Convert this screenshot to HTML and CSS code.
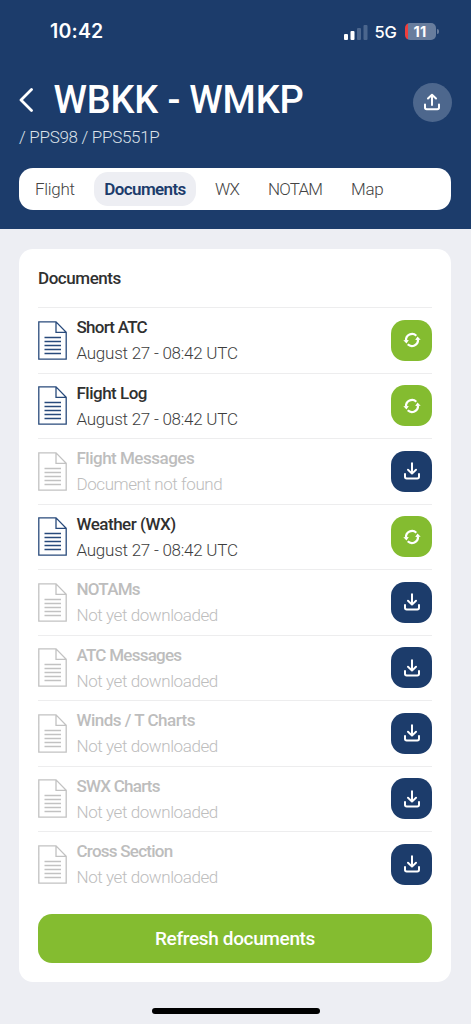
FILE: index.html
```
<!DOCTYPE html>
<html lang="en">
<head>
<meta charset="utf-8">
<title>Documents</title>
<link rel="stylesheet" href="styles.css">
</head>
<body>
<svg class="sprite" width="0" height="0">
  <symbol id="doc" viewBox="0 0 29 39">
    <path d="M.8.8H18L28.200 11.300V38.200H.8ZM18 .8V11.300H28.200" fill="none" stroke="currentColor" stroke-width="1.300"/>
    <path d="M6.500 16.500h16.500M6.500 20.500h16.500M6.500 24.500h16.500M6.500 28.500h16.500M6.500 32.500h16.500" stroke="currentColor" stroke-width="1.300"/>
  </symbol>
  <symbol id="download" viewBox="0 0 18 18">
    <path d="M9 1.300V11.500M5 7.800 9 11.600 13 7.800M2 12V14.700Q2 16.400 3.700 16.400H14.300Q16 16.400 16 14.700V12" fill="none" stroke="currentColor" stroke-width="2" stroke-linecap="round" stroke-linejoin="round"/>
  </symbol>
  <symbol id="sync" viewBox="0 0 18 18">
    <path d="M3 9.500A6.100 6.100 0 0 1 13.300 4.700M15 8.500A6.100 6.100 0 0 1 4.700 13.300" fill="none" stroke="currentColor" stroke-width="2.200"/>
    <path d="M.3 9.300 5.800 8.900 3.500 12.500ZM17.700 8.700 12.200 9.100 14.500 5.500Z" fill="currentColor"/>
  </symbol>
</svg>
<header class="header">
  <div class="status">
    <span class="time">10:42</span>
    <div class="indicators">
      <svg class="signal" viewBox="0 0 24 16"><rect x="0" y="10" width="4" height="6" rx="1" fill="#fff"/><rect x="6.500" y="7" width="4" height="9" rx="1" fill="#fff"/><rect x="13" y="4" width="4" height="12" rx="1" fill="#4b668d"/><rect x="19.500" y="1" width="4" height="15" rx="1" fill="#4b668d"/></svg>
      <span class="network">5G</span>
      <span class="battery">11</span>
      <span class="battery-tip"></span>
    </div>
  </div>
  <div class="title-row">
    <svg class="back" viewBox="0 0 14 24"><path d="M12.500 1.500 2 12 12.500 22.500" fill="none" stroke="#fff" stroke-width="2.800" stroke-linecap="round" stroke-linejoin="round"/></svg>
    <div class="title-box"><h1 class="title">WBKK - WMKP</h1></div>
    <button class="share"><svg class="icon" viewBox="0 0 18 18"><path d="M9 12V2M5 5.500 9 1.700 13 5.500M2 11.500V14.500Q2 16.200 3.700 16.200H14.300Q16 16.200 16 14.500V11.500" fill="none" stroke="#fff" stroke-width="2" stroke-linecap="round" stroke-linejoin="round"/></svg></button>
  </div>
  <p class="subtitle">/ PPS98 / PPS551P</p>
  <nav class="tabs">
    <span class="tab tab-flight">Flight</span>
    <span class="tab tab-documents">Documents</span>
    <span class="tab tab-wx">WX</span>
    <span class="tab tab-notam">NOTAM</span>
    <span class="tab tab-map">Map</span>
  </nav>
</header>
<main class="card">
  <h2 class="heading">Documents</h2>
  <div class="row"><svg class="doc"><use href="#doc"/></svg><div class="text"><div class="name tight">Short ATC</div><div class="info date">August 27 - 08:42 UTC</div></div><button class="action sync"><svg class="icon"><use href="#sync"/></svg></button></div>
  <div class="row"><svg class="doc"><use href="#doc"/></svg><div class="text"><div class="name">Flight Log</div><div class="info date">August 27 - 08:42 UTC</div></div><button class="action sync"><svg class="icon"><use href="#sync"/></svg></button></div>
  <div class="row muted"><svg class="doc"><use href="#doc"/></svg><div class="text"><div class="name">Flight Messages</div><div class="info">Document not found</div></div><button class="action"><svg class="icon"><use href="#download"/></svg></button></div>
  <div class="row"><svg class="doc"><use href="#doc"/></svg><div class="text"><div class="name">Weather (WX)</div><div class="info date">August 27 - 08:42 UTC</div></div><button class="action sync"><svg class="icon"><use href="#sync"/></svg></button></div>
  <div class="row muted"><svg class="doc"><use href="#doc"/></svg><div class="text"><div class="name tight">NOTAMs</div><div class="info">Not yet downloaded</div></div><button class="action"><svg class="icon"><use href="#download"/></svg></button></div>
  <div class="row muted"><svg class="doc"><use href="#doc"/></svg><div class="text"><div class="name tight">ATC Messages</div><div class="info">Not yet downloaded</div></div><button class="action"><svg class="icon"><use href="#download"/></svg></button></div>
  <div class="row muted"><svg class="doc"><use href="#doc"/></svg><div class="text"><div class="name">Winds / T Charts</div><div class="info">Not yet downloaded</div></div><button class="action"><svg class="icon"><use href="#download"/></svg></button></div>
  <div class="row muted"><svg class="doc"><use href="#doc"/></svg><div class="text"><div class="name tight">SWX Charts</div><div class="info">Not yet downloaded</div></div><button class="action"><svg class="icon"><use href="#download"/></svg></button></div>
  <div class="row muted"><svg class="doc"><use href="#doc"/></svg><div class="text"><div class="name tight">Cross Section</div><div class="info">Not yet downloaded</div></div><button class="action"><svg class="icon"><use href="#download"/></svg></button></div>
  <button class="refresh">Refresh documents</button>
</main>
<div class="home-bar"></div>
</body>
</html>
```

FILE: styles.css
```
* { box-sizing: border-box; margin: 0; }
body { width: 471px; height: 1024px; overflow: hidden; background: #edeef3; font-family: Roboto, "Liberation Sans", sans-serif; color: #303030; display: flex; flex-direction: column; }
.sprite { position: absolute; }
button { border: 0; padding: 0; font-family: inherit; }
.header { height: 229px; flex: none; background: #1c3c6b; color: #fff; padding: 20px 19.5px 0 19px; }
.status { height: 23px; display: flex; justify-content: space-between; align-items: center; padding: 0 13px 0 31px; }
.time { font: 600 19.500px/23px Inter, sans-serif; letter-spacing: 0.2px; }
.indicators { display: flex; align-items: center; }
.signal { width: 24px; height: 16px; margin-right: 7px; }
.network { font: 500 16.500px/22px Inter, sans-serif; width: 23px; margin-right: 7px; letter-spacing: -0.3px; }
.battery { width: 31px; height: 17px; border-radius: 5px; background: linear-gradient(90deg, #ef3e3c 3px, #687d9d 3px); font: 700 14.500px/17px Inter, sans-serif; text-align: center; letter-spacing: 0.3px; }
.battery-tip { width: 2px; height: 5px; margin-left: 1px; border-radius: 0 2px 2px 0; background: #687d9d; }
.title-row { height: 50px; margin-top: 32px; display: flex; align-items: center; }
.back { width: 14px; height: 24px; }
.title-box { flex: 1; padding-left: 20.5px; }
.title { font-size: 38px; line-height: 50px; font-weight: 500; white-space: nowrap; letter-spacing: -0.2px; }
.share { width: 39px; height: 39px; margin-top: 4px; border-radius: 50%; background: #4d678d; display: grid; place-items: center; }
.icon { width: 18px; height: 18px; display: block; }
.subtitle { height: 24px; line-height: 24px; font-size: 17px; font-weight: 300; color: #dce2ea; letter-spacing: -0.3px; }
.tabs { height: 42px; margin-top: 19px; width: 432px; background: #fff; border-radius: 14px; padding: 4px 5px 4px 16px; display: flex; align-items: center; color: #444; font-size: 17px; font-weight: 300; letter-spacing: -0.3px; }
.tab { white-space: nowrap; flex: none; }
.tab-flight { width: 59px; }
.tab-documents { width: 102px; height: 34px; line-height: 34px; border-radius: 14px; background: #edeef3; color: #1c3c6b; font-weight: 600; text-align: center; margin-right: 19px; letter-spacing: -0.6px; }
.tab-wx { width: 53px; letter-spacing: -0.8px; }
.tab-notam { width: 83px; letter-spacing: -0.8px; }
.card { width: 432px; height: 733px; flex: none; margin: 20px 0 0 19px; border-radius: 14px; background: #fff; padding: 0 19px; display: flex; flex-direction: column; }
.heading { height: 58px; line-height: 59px; font-size: 17px; font-weight: 500; letter-spacing: -0.45px; }
.row { height: 65.5px; flex: none; border-top: 1.500px solid #ededee; display: flex; align-items: center; }
.doc { width: 29px; height: 39px; margin-right: 9.5px; color: #284a7b; }
.text { flex: 1; height: 50px; }
.name { font-size: 17px; line-height: 25px; font-weight: 500; letter-spacing: -0.5px; }
.tight { letter-spacing: -0.75px; }
.info { font-size: 17px; line-height: 26px; font-weight: 300; color: #3d3d3d; letter-spacing: -0.42px; }
.date { letter-spacing: -0.25px; }
.muted .doc { color: #c2c2c2; }
.muted .name { color: #bdbdbd; }
.muted .info { color: #bdbdbd; }
.action { width: 41px; height: 41px; border-radius: 14px; background: #1c3c6b; color: #fff; display: grid; place-items: center; }
.sync { background: #84bc30; }
.refresh { height: 49px; flex: none; margin-top: 17px; border-radius: 14px; background: #84bc30; color: #fff; font-size: 19px; line-height: 50px; font-weight: 500; letter-spacing: -0.35px; }
.home-bar { width: 168px; height: 6px; flex: none; border-radius: 3px; background: #000; margin: 26px auto 0; }
```
